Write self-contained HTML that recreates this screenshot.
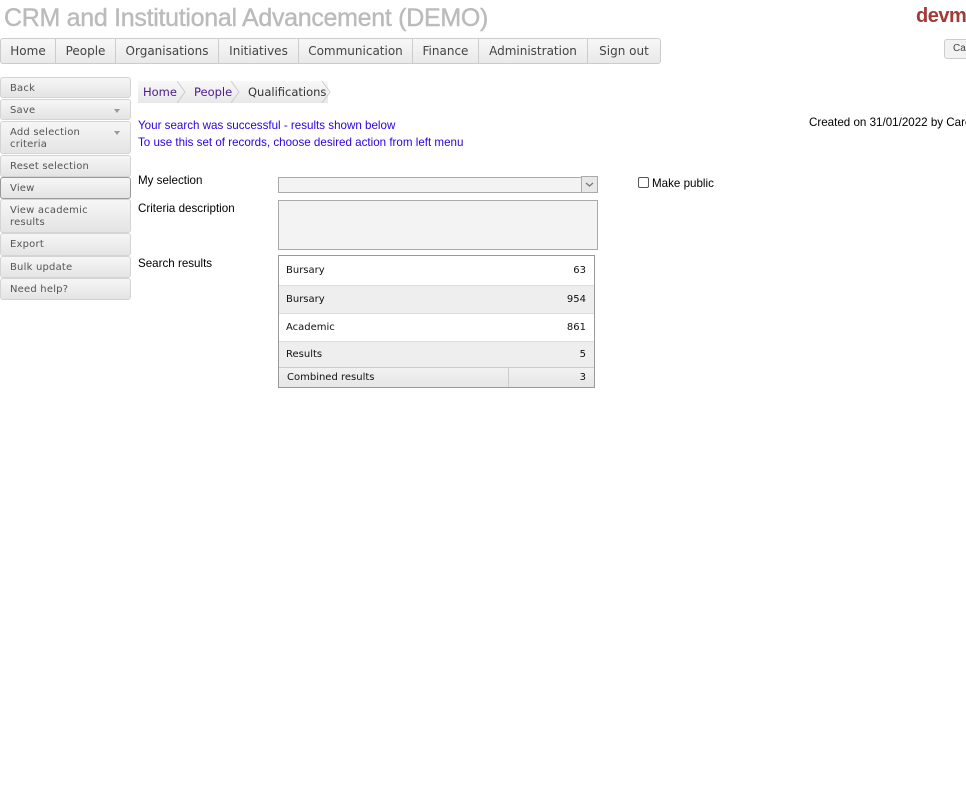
<!DOCTYPE html>
<html><head><style>
body{margin:0;width:966px;height:810px;background:#fff;position:relative;overflow:hidden;font-family:"Liberation Sans",Arial,sans-serif;}
.a{position:absolute}
.title{left:4px;top:4px;font-size:25px;color:#bbb;letter-spacing:-0.3px;-webkit-text-stroke:0.4px #bbb}
.logo{left:916px;top:5px;font-size:20px;font-weight:bold;color:#a33a35;letter-spacing:-0.5px}
.nav{left:0;top:38px;height:24px;border:1px solid #ccc;border-radius:3px;background:linear-gradient(#f7f7f7,#e9e9e9);display:flex}
.nav div{font-family:"DejaVu Sans",Verdana,sans-serif;font-size:12px;color:#444;border-right:1px solid #ccc;line-height:25px;text-align:center;box-sizing:border-box}
.nav div:last-child{border-right:none}
.side div{position:absolute;left:0;width:131px;box-sizing:border-box;border:1px solid #d4d4d4;border-radius:3px;background:linear-gradient(#f6f6f6,#e4e4e4);font-family:"DejaVu Sans",Verdana,sans-serif;font-size:10px;color:#555;padding:5px 9px 3px;line-height:12px;letter-spacing:0.2px}
.side .arr:after{content:"";position:absolute;right:10px;top:9px;border:3px solid transparent;border-top:4px solid #999}
.bc{left:138px;top:81px;height:22px;width:190px;background:linear-gradient(#f8f8f8,#e8e8e8);font-family:"DejaVu Sans",Verdana,sans-serif;font-size:11.5px;line-height:22px}
.bc span{position:absolute;top:0}
.lbl{font-size:12px;color:#000}
.msg{font-size:11.6px;color:#2c00e0}
table{border-collapse:collapse;font-family:"DejaVu Sans",Verdana,sans-serif;font-size:10px;color:#111}
</style></head><body>
<div class="a title">CRM and Institutional Advancement (DEMO)</div>
<div class="a logo">devm</div>
<div class="a" style="left:944px;top:39px;width:30px;height:18px;border:1px solid #ccc;border-radius:3px;background:#f2f2f2;font-size:10px;color:#444;line-height:18px;padding-left:8px">Can</div>
<div class="a nav">
<div style="width:55px">Home</div><div style="width:60px">People</div><div style="width:103px">Organisations</div><div style="width:80px">Initiatives</div><div style="width:114px">Communication</div><div style="width:66px">Finance</div><div style="width:109px">Administration</div><div style="width:72px">Sign out</div>
</div>
<div class="side">
<div style="top:77px;height:21px">Back</div>
<div class="arr" style="top:99px;height:21px">Save</div>
<div class="arr" style="top:121px;height:33px">Add selection<br>criteria</div>
<div style="top:155px;height:22px">Reset selection</div>
<div style="top:177px;height:22px;border-color:#999">View</div>
<div style="top:199px;height:34px">View academic<br>results</div>
<div style="top:233px;height:23px">Export</div>
<div style="top:256px;height:22px">Bulk update</div>
<div style="top:278px;height:22px">Need help?</div>
</div>
<div class="a bc">
<svg class="a" style="left:0;top:0" width="195" height="22"><g fill="none" stroke="#ccc"><path d="M39 0l8 11l-8 11M93 0l8 11l-8 11M184 0l8 11l-8 11"/></g></svg>
<span style="left:5px;color:#4b1a8a">Home</span><span style="left:56px;color:#4b1a8a">People</span><span style="left:110px;color:#333">Qualifications</span>
</div>
<div class="a msg" style="left:138px;top:119px">Your search was successful - results shown below</div>
<div class="a msg" style="left:138px;top:136px">To use this set of records, choose desired action from left menu</div>
<div class="a lbl" style="left:809px;top:116px;white-space:nowrap;font-size:11.6px">Created on 31/01/2022 by Caroline</div>
<div class="a lbl" style="left:138px;top:174px;font-size:11.6px">My selection</div>
<div class="a lbl" style="left:138px;top:202px;font-size:11.6px">Criteria description</div>
<div class="a lbl" style="left:138px;top:257px;font-size:11.6px">Search results</div>
<div class="a" style="left:278px;top:177px;width:302px;height:14px;border:1px solid #aaa;border-right:none;background:#f3f3f3"></div>
<div class="a" style="left:581px;top:176px;width:15px;height:15px;border:1px solid #aaa;background:#e8e8e8"><svg width="15" height="15"><path d="M4 6l3.5 3l3.5-3" fill="none" stroke="#777" stroke-width="1.3"/></svg></div>
<div class="a" style="left:278px;top:200px;width:318px;height:48px;border:1px solid #aaa;background:#f3f3f3"></div>
<div class="a" style="left:638px;top:177px;width:9px;height:9px;border:1px solid #555;border-radius:2px;background:#fff"></div>
<div class="a lbl" style="left:652px;top:177px;font-size:11.6px">Make public</div>
<div class="a" style="left:278px;top:255px;width:315px;border:1px solid #999">
<table style="width:315px">
<tr style="height:29px;background:#fff;border-bottom:1px solid #ddd"><td style="padding-left:7px">Bursary</td><td style="text-align:right;padding-right:8px">63</td></tr>
<tr style="height:28px;background:#eee;border-bottom:1px solid #ddd"><td style="padding-left:7px">Bursary</td><td style="text-align:right;padding-right:8px">954</td></tr>
<tr style="height:28px;background:#fff;border-bottom:1px solid #ddd"><td style="padding-left:7px">Academic</td><td style="text-align:right;padding-right:8px">861</td></tr>
<tr style="height:26px;background:#eee;border-bottom:1px solid #ccc"><td style="padding-left:7px">Results</td><td style="text-align:right;padding-right:8px">5</td></tr>
<tr style="height:20px;background:linear-gradient(#f2f2f2,#e6e6e6)"><td style="padding-left:8px;border-right:1px solid #ccc;width:220px">Combined results</td><td style="text-align:right;padding-right:8px">3</td></tr>
</table></div>
</body></html>
